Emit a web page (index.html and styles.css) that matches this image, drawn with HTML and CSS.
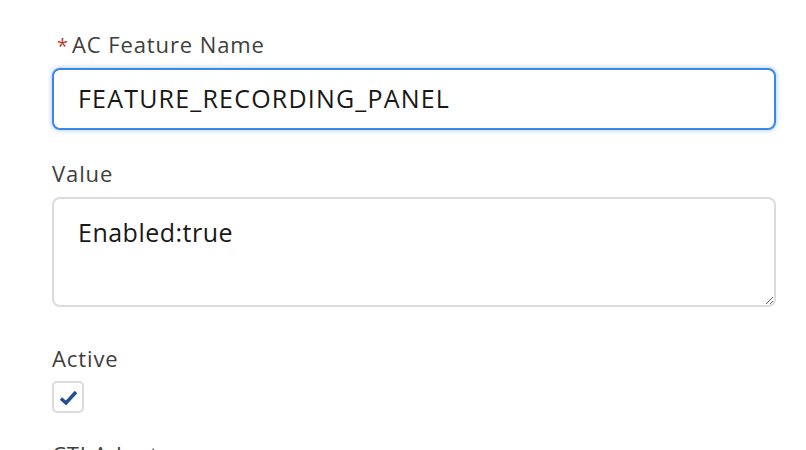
FILE: index.html
```html
<!DOCTYPE html>
<html lang="en">
<head>
<meta charset="utf-8">
<title>AC Feature</title>
<link rel="stylesheet" href="styles.css">
</head>
<body>
<form class="form">
  <div class="field field-name">
    <label class="label" for="name"><abbr class="required" title="required">*</abbr>AC Feature Name</label>
    <input id="name" class="input input-focus" type="text" value="FEATURE_RECORDING_PANEL">
  </div>
  <div class="field field-value">
    <label class="label" for="value">Value</label>
    <textarea id="value" class="textarea">Enabled:true</textarea>
  </div>
  <div class="field field-active">
    <span class="label">Active</span>
    <span class="checkbox" role="checkbox" aria-checked="true">
      <svg width="19" height="15" viewBox="0 0 19 15"><path d="M2 8.5 L7 13 L17 2" fill="none" stroke="#1f4f91" stroke-width="3.4"/></svg>
    </span>
  </div>
  <div class="field field-cti">
    <span class="label">CTI Adapter</span>
  </div>
</form>
</body>
</html>
```
FILE: styles.css
```css
html, body {
  margin: 0;
  padding: 0;
  background: #ffffff;
}
body {
  font-family: "Open Sans", "Noto Sans", sans-serif;
  color: #181818;
  overflow: hidden;
  height: 450px;
}
.form {
  display: flex;
  flex-direction: column;
  padding: 31px 30px 0 52px;
  width: 724px;
}
.field {
  display: flex;
  flex-direction: column;
}
.label {
  font-size: 22px;
  line-height: 26px;
  letter-spacing: 0.9px;
  color: #3e3e3c;
  display: flex;
  align-items: baseline;
}
.required {
  color: #c23934;
  text-decoration: none;
  border: 0;
  font-size: 20px;
  letter-spacing: 0;
  margin: 0 4px 0 5px;
}
.input {
  margin-top: 9px;
  box-sizing: border-box;
  height: 62px;
  width: 724px;
  border: 2px solid #3a87e8;
  border-radius: 8px;
  padding: 0 24px 2px;
  font-family: inherit;
  font-size: 25px;
  letter-spacing: 1.2px;
  color: #181818;
  outline: none;
  box-shadow: 0 0 4px 1px rgba(58, 135, 232, 0.35);
  background: #fff;
}
.field-value {
  margin-top: 30px;
}
.textarea {
  margin-top: 11px;
  box-sizing: border-box;
  height: 110px;
  width: 724px;
  border: 2px solid #dddbda;
  border-radius: 8px;
  padding: 15px 24px 11px;
  font-family: inherit;
  font-size: 25px;
  letter-spacing: 0.5px;
  line-height: 36px;
  color: #181818;
  resize: vertical;
  outline: none;
  background: #fff;
}
.field-active {
  margin-top: 38px;
}
.checkbox {
  margin-top: 10px;
  box-sizing: border-box;
  width: 32px;
  height: 32px;
  border: 2px solid #dddbda;
  border-radius: 5px;
  display: flex;
  align-items: center;
  justify-content: center;
}
.field-cti {
  margin-top: 28px;
}
```
